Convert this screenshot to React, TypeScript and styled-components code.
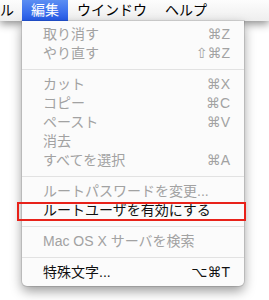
import React from 'react';
import styled, { createGlobalStyle } from 'styled-components';

const GlobalStyle = createGlobalStyle`
  html, body {
    margin: 0;
    padding: 0;
    background: #ffffff;
  }
  body {
    width: 269px;
    height: 300px;
    overflow: hidden;
    font-family: "Liberation Sans", "Noto Sans CJK JP", "DejaVu Sans", sans-serif;
  }
`;

type Item =
  | { kind: 'item'; label: string; shortcut?: string; disabled?: boolean; marked?: boolean }
  | { kind: 'sep' };

const items: Item[] = [
  { kind: 'item', label: '取り消す', shortcut: '⌘Z', disabled: true },
  { kind: 'item', label: 'やり直す', shortcut: '⇧⌘Z', disabled: true },
  { kind: 'sep' },
  { kind: 'item', label: 'カット', shortcut: '⌘X', disabled: true },
  { kind: 'item', label: 'コピー', shortcut: '⌘C', disabled: true },
  { kind: 'item', label: 'ペースト', shortcut: '⌘V', disabled: true },
  { kind: 'item', label: '消去', disabled: true },
  { kind: 'item', label: 'すべてを選択', shortcut: '⌘A', disabled: true },
  { kind: 'sep' },
  { kind: 'item', label: 'ルートパスワードを変更...', disabled: true },
  { kind: 'item', label: 'ルートユーザを有効にする', marked: true },
  { kind: 'sep' },
  { kind: 'item', label: 'Mac OS X サーバを検索', disabled: true },
  { kind: 'sep' },
  { kind: 'item', label: '特殊文字...', shortcut: '⌥⌘T' },
];

const MenuBar = styled.div`
  position: relative;
  z-index: 1;
  display: flex;
  align-items: stretch;
  height: 21px;
  background: linear-gradient(#fdfdfd, #eeeeee);
  box-shadow: 0 3px 9px rgba(0, 0, 0, 0.45);
  overflow: visible;
`;

const BarItem = styled.div<{ $active?: boolean; $edge?: boolean }>`
  position: relative;
  display: flex;
  align-items: center;
  padding: ${(p) => (p.$edge ? '0 8px 0 0' : '0 9px')};
  font-size: 14px;
  line-height: 21px;
  color: ${(p) => (p.$active ? '#ffffff' : '#000000')};
  background: ${(p) => (p.$active ? 'linear-gradient(#5b8ef3, #2459e8)' : 'transparent')};
  white-space: nowrap;
`;

const Dropdown = styled.div`
  position: absolute;
  top: 21px;
  left: 0;
  width: 222px;
  padding: 4px 0;
  background: #fbfbfb;
  border-radius: 0 0 5px 5px;
  box-shadow: 0 0 0 1px rgba(0, 0, 0, 0.1), 0 5px 12px rgba(0, 0, 0, 0.4);
  display: flex;
  flex-direction: column;
`;

const Row = styled.div<{ $disabled?: boolean; $marked?: boolean }>`
  position: relative;
  display: flex;
  justify-content: space-between;
  align-items: center;
  height: 19px;
  padding: 0 14px 0 21px;
  font-size: 14px;
  line-height: 19px;
  color: ${(p) => (p.$disabled ? '#a2a2a2' : '#111111')};
  white-space: nowrap;

  ${(p) =>
    p.$marked &&
    `
    &::after {
      content: '';
      position: absolute;
      left: -5px;
      right: -2px;
      top: 1px;
      bottom: -1px;
      border: 2px solid #e8221a;
    }
  `}
`;

const Shortcut = styled.span`
  font-family: "Liberation Sans", "DejaVu Sans", sans-serif;
  font-size: 14px;
`;

const Separator = styled.div`
  height: 12px;
  display: flex;
  align-items: center;

  &::before {
    content: '';
    flex: 1;
    height: 1px;
    background: #e2e2e2;
  }
`;

export default function App() {
  return (
    <>
      <GlobalStyle />
      <MenuBar>
        <BarItem $edge>ル</BarItem>
        <BarItem $active>
          編集
          <Dropdown>
            {items.map((it, i) =>
              it.kind === 'sep' ? (
                <Separator key={i} />
              ) : (
                <Row key={i} $disabled={it.disabled} $marked={it.marked}>
                  <span>{it.label}</span>
                  {it.shortcut && <Shortcut>{it.shortcut}</Shortcut>}
                </Row>
              )
            )}
          </Dropdown>
        </BarItem>
        <BarItem>ウインドウ</BarItem>
        <BarItem>ヘルプ</BarItem>
      </MenuBar>
    </>
  );
}
